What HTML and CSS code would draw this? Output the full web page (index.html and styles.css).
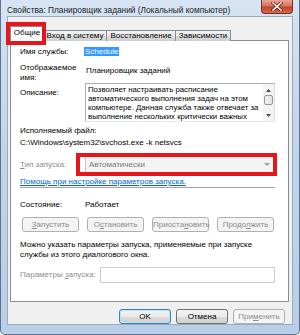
FILE: index.html
```html
<!DOCTYPE html>
<html lang="ru">
<head>
    <meta charset="UTF-8">
    <title>Свойства: Планировщик заданий</title>
    <link rel="stylesheet" href="styles.css">
</head>
<body>
    <div class="window">
        <div class="titlebar">
            <span class="title">Свойства: Планировщик заданий (Локальный компьютер)</span>
            <span class="close">
                <svg width="12" height="9" viewBox="0 0 12 9">
                    <path d="M2 1 L10 8 M10 1 L2 8" stroke="#5a1a12" stroke-width="3" stroke-linecap="square"/>
                    <path d="M2 1 L10 8 M10 1 L2 8" stroke="#ffffff" stroke-width="1.6" stroke-linecap="square"/>
                </svg>
            </span>
        </div>

        <div class="client">
            <div class="tabs">
                <div class="tab active marked">Общие</div>
                <div class="tab tab-logon">Вход в систему</div>
                <div class="tab tab-recovery">Восстановление</div>
                <div class="tab tab-deps">Зависимости</div>
            </div>

            <div class="panel">
                <div class="field row-name">
                    <span class="label">Имя службы:</span>
                    <span class="value"><span class="selected">Schedule</span></span>
                </div>

                <div class="field row-display">
                    <span class="label">Отображаемое<br>имя:</span>
                    <span class="value display-value">Планировщик заданий</span>
                </div>

                <div class="field row-desc">
                    <span class="label desc-label">Описание:</span>
                    <div class="textbox">
                        <div class="textbox-text">Позволяет настраивать расписание<br>автоматического выполнения задач на этом<br>компьютере. Данная служба также отвечает за<br>выполнение нескольких критически важных</div>
                        <div class="scrollbar">
                            <svg class="arrow" width="5" height="3" viewBox="0 0 5 3"><path d="M0 3 L2.5 0 L5 3 Z" fill="#4d4d4d"/></svg>
                            <div class="thumb"></div>
                            <svg class="arrow" width="5" height="3" viewBox="0 0 5 3"><path d="M0 0 L2.5 3 L5 0 Z" fill="#4d4d4d"/></svg>
                        </div>
                    </div>
                </div>

                <div class="row-exe">Исполняемый файл:</div>
                <div class="row-path">C:\Windows\system32\svchost.exe -k netsvcs</div>

                <div class="field row-startup">
                    <span class="label muted"><u>Т</u>ип запуска:</span>
                    <div class="combo marked">
                        <span>Автоматически</span>
                        <svg width="6" height="3" viewBox="0 0 6 3"><path d="M0 0 L3 3 L6 0 Z" fill="#a0a0a0"/></svg>
                    </div>
                </div>

                <div class="row-link"><a href="#">Помощь при настройке параметров запуска.</a></div>

                <div class="field row-state">
                    <span class="label">Состояние:</span>
                    <span class="value">Работает</span>
                </div>

                <div class="service-buttons">
                    <button class="btn" disabled><u>З</u>апустить</button>
                    <button class="btn" disabled>О<u>с</u>тановить</button>
                    <button class="btn" disabled>Приоста<u>н</u>овить</button>
                    <button class="btn" disabled>Продо<u>л</u>жить</button>
                </div>

                <div class="row-hint">Можно указать параметры запуска, применяемые при запуске<br>службы из этого диалогового окна.</div>

                <div class="field row-params">
                    <span class="label params-label muted">Параметры <u>з</u>апуска:</span>
                    <div class="input"></div>
                </div>
            </div>

            <div class="footer">
                <button class="btn default">OK</button>
                <button class="btn">Отмена</button>
                <button class="btn" disabled>При<u>м</u>енить</button>
            </div>
        </div>
    </div>
</body>
</html>
```

FILE: styles.css
```css
body {
    margin: 0;
    padding: 0;
    font-family: "Liberation Sans", Arial, sans-serif;
    font-size: 8px;
    line-height: 10px;
    color: #000000;
    background: #ffffff;
}

.window {
    width: 300px;
    height: 335px;
    box-sizing: border-box;
    padding: 0 6px 9px 6px;
    border: 1px solid #5f7390;
    border-top: none;
    border-radius: 0 0 5px 5px;
    background: linear-gradient(to bottom, #d6e4f3, #c2d5eb 40%, #b9cfe8);
    display: flex;
    flex-direction: column;
}

/* title bar */
.titlebar {
    height: 16px;
    flex: none;
    display: flex;
    justify-content: space-between;
    align-items: flex-start;
}

.title {
    padding-top: 5px;
    font-size: 8.3px;
    color: #1e1e1e;
    white-space: nowrap;
}

.close {
    width: 32px;
    height: 14px;
    box-sizing: border-box;
    border: 1px solid #7b2d21;
    border-top: none;
    border-radius: 0 0 4px 4px;
    background: linear-gradient(to bottom, #e8a698, #d9735e 45%, #c2432c 55%, #d56a4f);
    display: flex;
    justify-content: center;
    align-items: center;
}

/* client area */
.client {
    flex: 1;
    border: 1px solid #98abc3;
    background: #f0f0f0;
    padding: 9px 3px 0 2px;
    display: flex;
    flex-direction: column;
}

.tabs {
    display: flex;
    align-items: flex-end;
    margin-bottom: -1px;
    position: relative;
    z-index: 1;
}

.tab {
    height: 11px;
    box-sizing: border-box;
    border: 1px solid #898c95;
    border-bottom: none;
    margin-left: -1px;
    background: linear-gradient(to bottom, #f2f2f2, #ebebeb 50%, #dddddd 50%, #cfcfcf);
    text-align: center;
    line-height: 10px;
    white-space: nowrap;
}

.tab.active {
    height: 15px;
    width: 34px;
    margin-left: 0;
    background: #ffffff;
    line-height: 12px;
    position: relative;
    z-index: 2;
}

.tab-logon {
    width: 64px;
}

.tab-recovery {
    width: 70px;
}

.tab-deps {
    width: 56px;
}

/* red annotation boxes */
.marked {
    position: relative;
}

.tab.marked::after {
    content: "";
    position: absolute;
    left: -5px;
    right: -3px;
    top: -5px;
    bottom: -4px;
    border: 4px solid #e4161e;
}

.combo.marked::after {
    content: "";
    position: absolute;
    left: -10px;
    right: -3px;
    top: -4px;
    bottom: -4px;
    border: 4px solid #e4161e;
}

/* panel */
.panel {
    height: 262px;
    flex: none;
    box-sizing: border-box;
    border: 1px solid #898c95;
    background: #ffffff;
    padding: 6px 13px 0 9px;
    display: flex;
    flex-direction: column;
}

.field {
    display: flex;
    align-items: flex-start;
}

.label {
    width: 65px;
    flex: none;
    white-space: nowrap;
}

.muted {
    color: #8d8d8d;
}

.value {
    white-space: nowrap;
}

.selected {
    background: #3399ff;
    color: #ffffff;
    padding: 0 1px;
    margin-left: -1px;
}

.row-display {
    margin-top: 6px;
}

.display-value {
    margin-top: 3px;
    padding-left: 1px;
}

.row-desc {
    margin-top: 0;
}

.desc-label {
    margin-top: 5px;
}

.textbox {
    flex: 1;
    height: 39px;
    box-sizing: border-box;
    border: 1px solid #abadb3;
    border-right-color: #dbdfe6;
    border-bottom-color: #e3e9ef;
    display: flex;
    overflow: hidden;
}

.textbox-text {
    flex: 1;
    padding: 1px 0 0 2px;
    line-height: 9px;
    font-size: 7.8px;
    white-space: nowrap;
    overflow: hidden;
}

.scrollbar {
    width: 11px;
    flex: none;
    background: #f4f4f4;
    display: flex;
    flex-direction: column;
    align-items: center;
    padding: 5px 0 4px;
    box-sizing: border-box;
}

.scrollbar .arrow {
    flex: none;
}

.thumb {
    width: 9px;
    height: 10px;
    box-sizing: border-box;
    margin: 3px 0 auto;
    border: 1px solid #979797;
    border-radius: 2px;
    background: linear-gradient(to right, #f3f3f3, #e2e2e2);
}

.row-exe {
    margin-top: 4px;
}

.row-path {
    margin-top: 2px;
    white-space: nowrap;
}

.row-startup {
    margin-top: 8px;
    align-items: center;
}

.combo {
    flex: 1;
    height: 17px;
    box-sizing: border-box;
    border: 1px solid #c3c6c9;
    border-radius: 2px;
    background: #f4f4f4;
    color: #7a7a7a;
    display: flex;
    justify-content: space-between;
    align-items: center;
    padding: 0 4px 0 3px;
}

.row-link {
    margin-top: 4px;
    border-bottom: 1px solid #a0a0a0;
}

.row-link a {
    color: #0066cc;
    text-decoration: underline;
}

.row-state {
    margin-top: 12px;
}

.service-buttons {
    margin: 7px 1px 0 2px;
    display: flex;
    justify-content: space-between;
}

.service-buttons .btn {
    width: 57px;
}

.row-hint {
    margin-top: 8px;
    white-space: nowrap;
}

.row-params {
    margin-top: 7px;
    align-items: center;
}

.params-label {
    width: 80px;
}

.input {
    flex: 1;
    height: 16px;
    box-sizing: border-box;
    border: 1px solid #c9cbcf;
    border-radius: 1px;
    background: #ffffff;
}

/* buttons */
.btn {
    height: 15px;
    box-sizing: border-box;
    padding: 0;
    border: 1px solid #707070;
    border-radius: 3px;
    background: linear-gradient(to bottom, #f2f2f2, #ebebeb 50%, #dddddd 50%, #cfcfcf);
    font-family: "Liberation Sans", Arial, sans-serif;
    font-size: 8px;
    line-height: 12px;
    color: #000000;
}

.btn:disabled {
    border-color: #adb2b5;
    background: #f4f4f4;
    color: #8b8b8b;
}

.btn.default {
    border-color: #3c7fb1;
    box-shadow: inset 0 0 0 1px #bfe3f8;
}

.footer {
    margin-top: 7px;
    padding-right: 4px;
    display: flex;
    justify-content: flex-end;
    gap: 5px;
}

.footer .btn {
    width: 52px;
}
```
